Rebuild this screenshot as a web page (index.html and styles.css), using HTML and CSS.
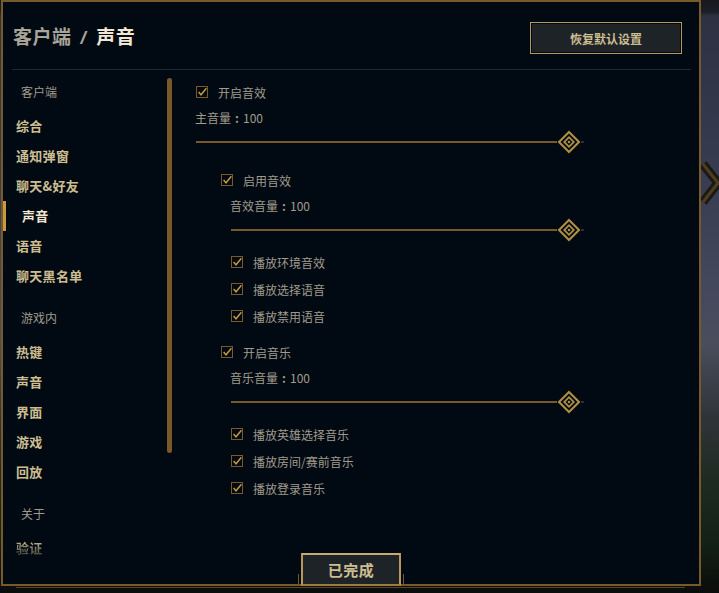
FILE: index.html
```html
<!DOCTYPE html>
<html lang="zh-CN">
<head>
    <meta charset="UTF-8">
    <title>设置 - 声音</title>
    <link rel="stylesheet" href="styles.css">
</head>
<body>
    <svg class="defs" width="0" height="0">
        <symbol id="chk" viewBox="0 0 12 12">
            <rect x="0.5" y="0.5" width="11" height="11" fill="none" stroke="#785a28"/>
            <path d="M2.6 6 5 8.8 10.4 2.2" fill="none" stroke="#c89b3c" stroke-width="1.4"/>
        </symbol>
        <symbol id="thumb" viewBox="0 0 24 24">
            <path d="M12 0.5 23.5 12 12 23.5 0.5 12Z" fill="#b08e44"/>
            <path d="M12 3.5 20.5 12 12 20.5 3.5 12Z" fill="#010a13"/>
            <path d="M12 6 18 12 12 18 6 12Z" fill="#b08e44"/>
            <path d="M12 8.5 15.5 12 12 15.5 8.5 12Z" fill="#010a13"/>
            <circle cx="12" cy="12" r="1.3" fill="#b08e44"/>
        </symbol>
    </svg>

    <!-- game client behind the dialog -->
    <svg class="bg-chevron" width="24" height="46" viewBox="0 0 24 46">
        <path d="M5 4 20 23 5 42" fill="none" stroke="#1a1916" stroke-width="9"/>
        <path d="M5 4 20 23 5 42" fill="none" stroke="#4e3d1e" stroke-width="3"/>
    </svg>

    <div class="dialog">
        <div class="header">
            <h1 class="title"><span class="crumb">客户端</span><span class="slash">/</span>声音</h1>
            <button class="reset">恢复默认设置</button>
        </div>
        <div class="divider"></div>

        <div class="main">
            <div class="nav">
                <div class="nav-label">客户端</div>
                <div class="nav-item">综合</div>
                <div class="nav-item">通知弹窗</div>
                <div class="nav-item">聊天&amp;好友</div>
                <div class="nav-item active">声音</div>
                <div class="nav-item">语音</div>
                <div class="nav-item">聊天黑名单</div>

                <div class="nav-label">游戏内</div>
                <div class="nav-item">热键</div>
                <div class="nav-item">声音</div>
                <div class="nav-item">界面</div>
                <div class="nav-item">游戏</div>
                <div class="nav-item">回放</div>

                <div class="nav-label">关于</div>
                <div class="nav-item fade">验证</div>
            </div>
            <div class="scrollbar"></div>

            <div class="content">
                <div class="check-row"><svg class="box"><use href="#chk"/></svg>开启音效</div>
                <div class="value">主音量<span class="colon">:</span>100</div>
                <div class="slider"><span class="track"></span><svg class="thumb"><use href="#thumb"/></svg><span class="stub"></span></div>

                <div class="group">
                    <div class="check-row head"><svg class="box"><use href="#chk"/></svg>启用音效</div>
                    <div class="value">音效音量<span class="colon">:</span>100</div>
                    <div class="slider"><span class="track"></span><svg class="thumb"><use href="#thumb"/></svg><span class="stub"></span></div>
                    <div class="subs">
                        <div class="check-row"><svg class="box"><use href="#chk"/></svg>播放环境音效</div>
                        <div class="check-row"><svg class="box"><use href="#chk"/></svg>播放选择语音</div>
                        <div class="check-row"><svg class="box"><use href="#chk"/></svg>播放禁用语音</div>
                    </div>
                </div>

                <div class="group">
                    <div class="check-row head"><svg class="box"><use href="#chk"/></svg>开启音乐</div>
                    <div class="value">音乐音量<span class="colon">:</span>100</div>
                    <div class="slider"><span class="track"></span><svg class="thumb"><use href="#thumb"/></svg><span class="stub"></span></div>
                    <div class="subs">
                        <div class="check-row"><svg class="box"><use href="#chk"/></svg>播放英雄选择音乐</div>
                        <div class="check-row"><svg class="box"><use href="#chk"/></svg>播放房间/赛前音乐</div>
                        <div class="check-row"><svg class="box"><use href="#chk"/></svg>播放登录音乐</div>
                    </div>
                </div>
            </div>
        </div>

        <button class="done">已完成</button>
    </div>
    <div class="frame-line"></div>
</body>
</html>
```

FILE: styles.css
```css
body {
    margin: 0;
    width: 719px;
    height: 593px;
    overflow: hidden;
    position: relative;
    font-family: "Noto Sans CJK SC", "Noto Sans", sans-serif;
    background: linear-gradient(180deg, #16181d 0, #1c1f26 12px, #2d3142 16px, #373c51 30%, #42475c 46%, #4a4d5c 58%, #30343a 70%, #1d2a1f 82%, #132016 92%, #0a0c0b 100%);
}
.defs {
    position: absolute;
}
.bg-chevron {
    position: absolute;
    left: 698px;
    top: 160px;
}
.dialog {
    position: relative;
    box-sizing: border-box;
    width: 700px;
    height: 586px;
    margin-left: 1px;
    border: 2px solid #785a28;
    background: #010a13;
    display: flex;
    flex-direction: column;
}
.header {
    box-sizing: border-box;
    height: 67px;
    padding: 20px 17px 0 10px;
    display: flex;
    justify-content: space-between;
    align-items: flex-start;
}
.title {
    margin: 0;
    font-size: 19px;
    line-height: 28px;
    font-weight: bold;
    letter-spacing: 0.5px;
    color: #f0e6d2;
}
.crumb {
    color: #a9a498;
}
.slash {
    color: #a9a498;
    margin: 0 10px 0 9px;
    font-family: "Liberation Sans", sans-serif;
    font-size: 19px;
    font-weight: bold;
    font-style: italic;
}
.reset {
    width: 152px;
    height: 32px;
    border: 1px solid #b8975a;
    box-shadow: inset 0 0 0 1px #010a13;
    background: #1e2328;
    color: #cdbe91;
    font-family: inherit;
    font-size: 12px;
    font-weight: bold;
    padding: 0;
}
.divider {
    height: 1px;
    margin: 0 8px 0 9px;
    background: #1e282e;
}
.main {
    flex: 1;
    display: flex;
    overflow: hidden;
}
.nav {
    width: 164px;
    flex: none;
    padding-top: 7px;
}
.nav-label {
    height: 30px;
    line-height: 30px;
    padding-left: 18px;
    margin: 12px 0 4px;
    font-size: 12px;
    color: #a09b8c;
}
.nav-label:first-child {
    margin-top: 0;
}
.nav-item {
    height: 30px;
    line-height: 30px;
    padding-left: 13px;
    font-size: 13px;
    font-weight: bold;
    letter-spacing: 0.3px;
    color: #cdbe91;
}
.nav-item.active {
    border-left: 3px solid #c89b3c;
    padding-left: 16px;
    color: #f0e6d2;
}
.nav-item.fade {
    background: linear-gradient(180deg, #b3a77f 35%, #2c302c 80%);
    -webkit-background-clip: text;
    background-clip: text;
    color: transparent;
}
.scrollbar {
    width: 5px;
    height: 375px;
    margin-top: 8px;
    border-radius: 3px;
    background: #785a28;
    flex: none;
}
.content {
    width: 388px;
    flex: none;
    padding: 12px 0 0 24px;
    font-size: 12px;
    color: #a09b8c;
}
.check-row {
    height: 20px;
    display: flex;
    align-items: center;
    gap: 10px;
}
.box {
    width: 12px;
    height: 12px;
    flex: none;
}
.value {
    height: 20px;
    line-height: 20px;
    margin: 6px 0 0 -1px;
}
.colon {
    display: inline-block;
    width: 12px;
    text-align: center;
    font-weight: bold;
}
.slider {
    height: 24px;
    margin-top: 2px;
    display: flex;
    align-items: center;
}
.track {
    flex: 1;
    height: 2px;
    background: #785a28;
}
.thumb {
    width: 24px;
    height: 24px;
    flex: none;
}
.stub {
    width: 3px;
    height: 2px;
    background: #2a2e33;
}
.group {
    margin-top: 16px;
    padding-left: 35px;
}
.group .head {
    margin-left: -10px;
}
.subs {
    margin-top: 10px;
    display: flex;
    flex-direction: column;
    gap: 7px;
}
.done {
    position: absolute;
    left: 298px;
    bottom: -2px;
    width: 100px;
    height: 33px;
    border: 2px solid #b8975a;
    border-top-color: #c8aa6e;
    border-bottom-color: #9a7b42;
    background: #1e2328;
    color: #cdbe91;
    font-family: inherit;
    font-size: 15px;
    font-weight: bold;
    letter-spacing: 0.5px;
    padding: 0;
}
.done::before,
.done::after {
    content: "";
    position: absolute;
    top: 19px;
    width: 1px;
    height: 10px;
    background: #785a28;
}
.done::before {
    left: -5px;
}
.done::after {
    right: -5px;
}
.frame-line {
    width: 669px;
    height: 1px;
    margin: 1px 0 0 16px;
    background: #5b4521;
}
```
